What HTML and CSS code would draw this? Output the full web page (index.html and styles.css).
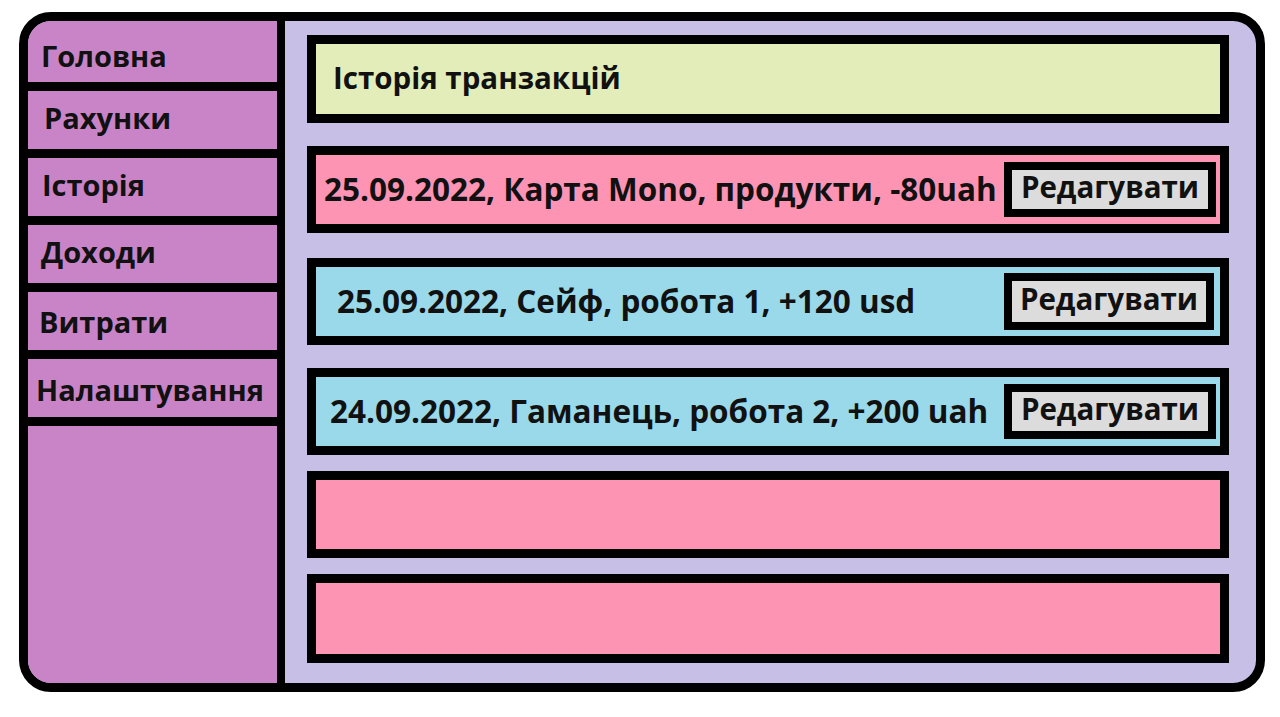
FILE: index.html
```html
<!DOCTYPE html>
<html lang="uk">
<head>
<meta charset="utf-8">
<title>Історія транзакцій</title>
<link rel="stylesheet" href="styles.css">
</head>
<body>
<div class="frame">
  <nav class="sidebar">
    <div class="nav-item nav-item--first">Головна</div>
    <div class="nav-item nav-item--r">Рахунки</div>
    <div class="nav-item nav-item--i">Історія</div>
    <div class="nav-item nav-item--d">Доходи</div>
    <div class="nav-item nav-item--v">Витрати</div>
    <div class="nav-item nav-item--n">Налаштування</div>
  </nav>
  <main class="main">
    <div class="box box--title">Історія транзакцій</div>
    <div class="box box--pink row row--1">
      <span class="row-text">25.09.2022, Карта Mono, продукти, -80uah</span>
      <button class="edit">Редагувати</button>
    </div>
    <div class="box box--blue row row--2">
      <span class="row-text">25.09.2022, Сейф, робота 1, +120 usd</span>
      <button class="edit">Редагувати</button>
    </div>
    <div class="box box--blue row row--3">
      <span class="row-text">24.09.2022, Гаманець, робота 2, +200 uah</span>
      <button class="edit">Редагувати</button>
    </div>
    <div class="box box--pink row row--4"></div>
    <div class="box box--pink row row--5"></div>
  </main>
</div>
</body>
</html>
```

FILE: styles.css
```css
* { box-sizing: border-box; }

html, body {
  margin: 0;
  padding: 0;
  background: #ffffff;
}

body {
  font-family: "Open Sans", "Liberation Sans", sans-serif;
  font-weight: 700;
  color: #111111;
}

.frame {
  margin: 12px 0 0 19px;
  width: 1246px;
  height: 680px;
  border: 9px solid #000;
  border-radius: 32px;
  overflow: hidden;
  display: flex;
  background: #c8bfe7;
}

.sidebar {
  width: 257px;
  flex: none;
  background: #c984c8;
  border-right: 8px solid #000;
  display: flex;
  flex-direction: column;
}

.nav-item {
  height: 67px;
  border-bottom: 9px solid #000;
  display: flex;
  align-items: center;
  font-size: 29px;
  padding-left: 14px;
  white-space: nowrap;
}

.nav-item--first { height: 70px; padding-left: 13px; padding-top: 7px; }
.nav-item--r { padding-left: 16px; padding-bottom: 6px; }
.nav-item--i { padding-left: 14px; padding-bottom: 5px; }
.nav-item--d { padding-left: 13px; padding-bottom: 5px; }
.nav-item--v { padding-left: 11px; }
.nav-item--n { padding-left: 8px; padding-top: 2px; }

.main {
  flex: 1;
  padding: 14px 27px 0 22px;
  display: flex;
  flex-direction: column;
}

.box {
  border: 9px solid #000;
  height: 88px;
  flex: none;
}

.box--title {
  background: #e2edb9;
  display: flex;
  align-items: center;
  padding-left: 17px;
  padding-bottom: 3px;
  font-size: 29.5px;
}

.box--pink { background: #fe94b4; }
.box--blue { background: #99d9ea; }

.row {
  height: 87px;
  display: flex;
  align-items: center;
  justify-content: space-between;
  padding-right: 5px;
}

.row-text {
  font-size: 31.5px;
  white-space: nowrap;
  padding-bottom: 3px;
}

.row--1 { margin-top: 23px; padding-left: 8px; padding-right: 4px; }
.row--2 { margin-top: 25px; padding-left: 21px; padding-right: 6px; }
.row--3 { margin-top: 23px; padding-left: 14px; padding-right: 4px; }
.row--4 { margin-top: 16px; }
.row--5 { margin-top: 16px; height: 89px; }

.edit {
  font: inherit;
  font-size: 29.5px;
  color: inherit;
  background: #dcdcdc;
  border: 8px solid #000;
  border-radius: 0;
  height: 55px;
  width: 212px;
  padding: 0 0 6px 0;
  margin: 0;
  display: flex;
  align-items: center;
  justify-content: center;
  white-space: nowrap;
}

.row--2 .edit { height: 57px; width: 210px; }
```
